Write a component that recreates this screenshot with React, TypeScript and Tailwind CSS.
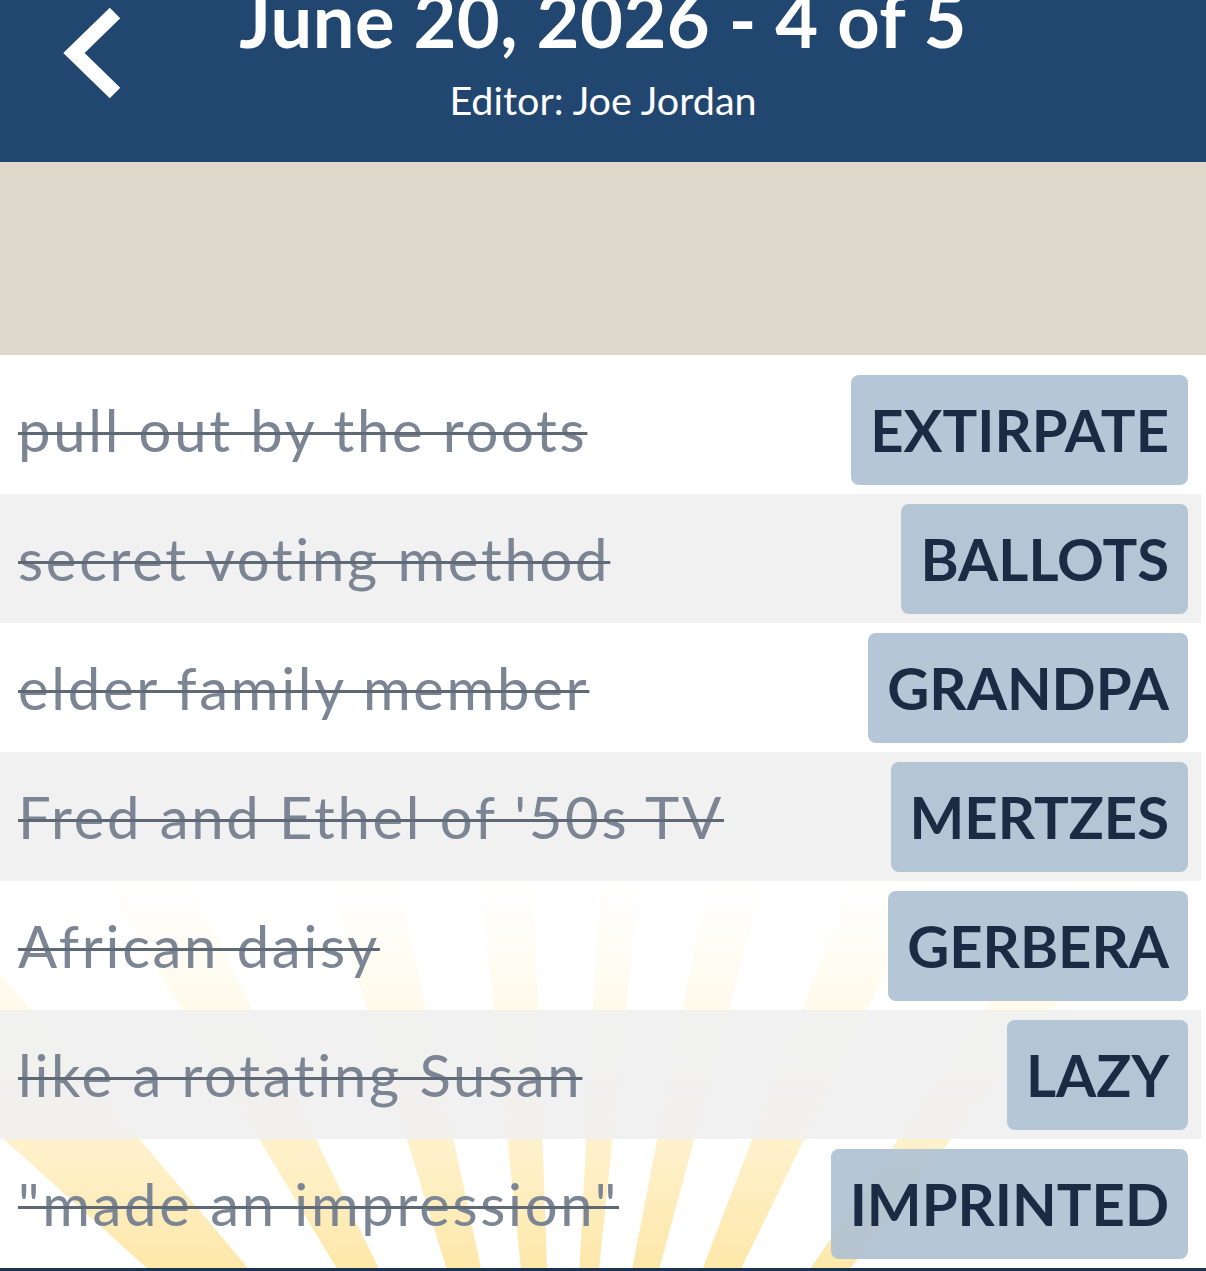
const clues = [
  { clue: "pull out by the roots", answer: "EXTIRPATE" },
  { clue: "secret voting method", answer: "BALLOTS" },
  { clue: "elder family member", answer: "GRANDPA" },
  { clue: "Fred and Ethel of '50s TV", answer: "MERTZES" },
  { clue: "African daisy", answer: "GERBERA" },
  { clue: "like a rotating Susan", answer: "LAZY" },
  { clue: "\"made an impression\"", answer: "IMPRINTED" },
];

// sunburst rays, angles in degrees from vertical around a point below the list
const rays: [number, number][] = [
  [-48, -40],
  [-31, -26],
  [-17, -12],
  [-6, -2],
  [3, 6],
  [11, 15],
  [21, 26],
  [34, 38],
];

const CX = 560;
const CY = 1640;

const rayPoints = (a1: number, a2: number) => {
  const top = 600;
  const x1 = CX + Math.tan((a1 * Math.PI) / 180) * (CY - top);
  const x2 = CX + Math.tan((a2 * Math.PI) / 180) * (CY - top);
  return `${CX},${CY} ${x1},${top} ${x2},${top}`;
};

const Sunburst = () => (
  <svg
    className="absolute inset-0 h-full w-full"
    viewBox="0 355 1206 913"
    preserveAspectRatio="none"
  >
    <defs>
      <linearGradient id="ray" gradientUnits="userSpaceOnUse" x1="0" y1="880" x2="0" y2="1268">
        <stop offset="0" stopColor="#fde7a2" stopOpacity="0" />
        <stop offset="0.45" stopColor="#fde7a2" stopOpacity="0.3" />
        <stop offset="1" stopColor="#fde39a" stopOpacity="0.85" />
      </linearGradient>
    </defs>
    {rays.map(([a, b]) => (
      <polygon key={a} points={rayPoints(a, b)} fill="url(#ray)" />
    ))}
  </svg>
);

const BackChevron = () => (
  <svg width="64" height="96" viewBox="0 0 64 96" className="mt-[19px] ml-[62px] self-start">
    <polyline
      points="53,10 12,50 53,90"
      fill="none"
      stroke="#ffffff"
      strokeWidth="15"
      strokeLinejoin="miter"
    />
  </svg>
);

export default function App() {
  return (
    <div className="min-h-screen bg-white font-['Lato',sans-serif]">
      <header className="h-[162px] overflow-hidden bg-[#21466f] text-white">
        <div className="mt-[-16px] grid grid-cols-[1fr_auto_1fr]">
          <div className="row-span-2 flex">
            <BackChevron />
          </div>
          <h1 className="text-center text-[74px] font-bold leading-[72px] tracking-[0.5px]">
            June 20, 2026 - 4 of 5
          </h1>
          <p className="col-start-2 mt-[24px] text-center text-[39.5px] leading-[40px]">
            Editor: Joe Jordan
          </p>
        </div>
      </header>

      <div className="h-[193px] bg-[#dfd8cd]" />

      <div className="relative pt-[10px] pr-[5px]">
        <Sunburst />
        <div className="relative">
          {clues.map((c, i) => (
            <div
              key={c.answer}
              className={`flex h-[129px] items-center justify-between pl-[18px] pr-[13px] ${
                i % 2 === 1 ? "bg-[#efefef]/90" : ""
              }`}
            >
              <span className="text-[58px] leading-none tracking-[2.7px] text-[#7c8594] line-through decoration-3 decoration-[#5f6875]">
                {c.clue}
              </span>
              <span className="flex h-[110px] items-center rounded-[8px] bg-[#adc0d1]/90 px-[19px] text-[58px] font-bold text-[#1c2b44]">
                {c.answer}
              </span>
            </div>
          ))}
        </div>
      </div>

      <div className="h-[40px] bg-[#1c3350]" />
    </div>
  );
}
